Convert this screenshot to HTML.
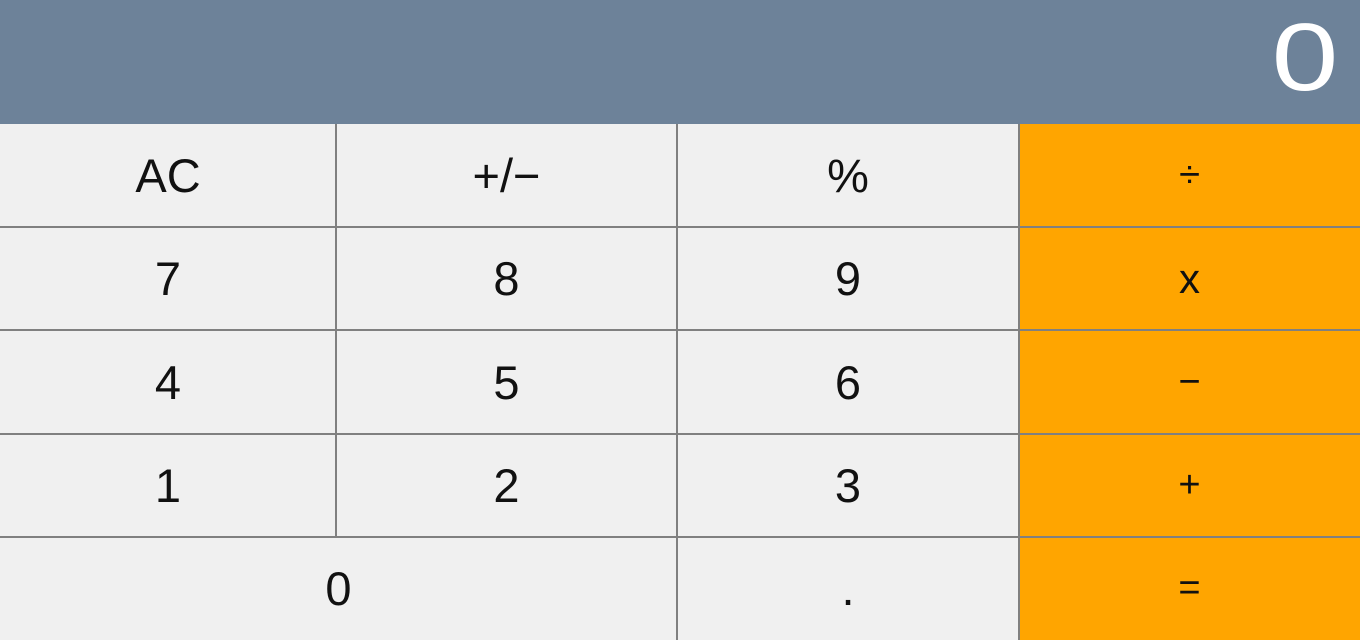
<!DOCTYPE html>
<html><head><style>
*{margin:0;padding:0;box-sizing:border-box}
body{width:1360px;height:640px;overflow:hidden;background:#f0f0f0;font-family:"Liberation Sans",sans-serif;position:relative}
#d{position:absolute;left:0;top:0;width:1360px;height:124px;background:#6d8299;color:#fff;font-size:96px;text-align:right;padding-right:22px;line-height:116px;transform-origin:right;}
#d span{display:inline-block;transform:scaleX(1.25);transform-origin:right}
.c{position:absolute;display:flex;align-items:center;justify-content:center;font-size:47px;color:#111}
.op{font-size:38px}
.o{background:#ffa500}
.v{position:absolute;width:2px;background:#808080}
.h{position:absolute;height:2px;background:#808080;left:0;width:1360px}
</style></head><body>
<div id="d"><span>0</span></div>
<div class="c o" style="left:1019px;top:124px;width:341px;height:516px"></div>
<div class="c" style="left:0;top:124px;width:336px;height:103px">AC</div>
<div class="c" style="left:336px;top:124px;width:341px;height:103px">+/−</div>
<div class="c" style="left:677px;top:124px;width:342px;height:103px">%</div>
<div class="c op" style="left:1019px;top:124px;width:341px;height:103px">÷</div>
<div class="c" style="left:0;top:227px;width:336px;height:103px">7</div>
<div class="c" style="left:336px;top:227px;width:341px;height:103px">8</div>
<div class="c" style="left:677px;top:227px;width:342px;height:103px">9</div>
<div class="c" style="left:1019px;top:227px;width:341px;height:103px;font-size:42px">x</div>
<div class="c" style="left:0;top:330px;width:336px;height:104px">4</div>
<div class="c" style="left:336px;top:330px;width:341px;height:104px">5</div>
<div class="c" style="left:677px;top:330px;width:342px;height:104px">6</div>
<div class="c op" style="left:1019px;top:330px;width:341px;height:104px">−</div>
<div class="c" style="left:0;top:434px;width:336px;height:103px">1</div>
<div class="c" style="left:336px;top:434px;width:341px;height:103px">2</div>
<div class="c" style="left:677px;top:434px;width:342px;height:103px">3</div>
<div class="c op" style="left:1019px;top:434px;width:341px;height:103px">+</div>
<div class="c" style="left:0;top:537px;width:677px;height:103px">0</div>
<div class="c" style="left:677px;top:537px;width:342px;height:103px">.</div>
<div class="c op" style="left:1019px;top:537px;width:341px;height:103px">=</div>
<div class="h" style="top:226px"></div>
<div class="h" style="top:329px"></div>
<div class="h" style="top:433px"></div>
<div class="h" style="top:536px"></div>
<div class="v" style="left:335px;top:124px;height:413px"></div>
<div class="v" style="left:676px;top:124px;height:516px"></div>
<div class="v" style="left:1018px;top:124px;height:516px"></div>
</body></html>
